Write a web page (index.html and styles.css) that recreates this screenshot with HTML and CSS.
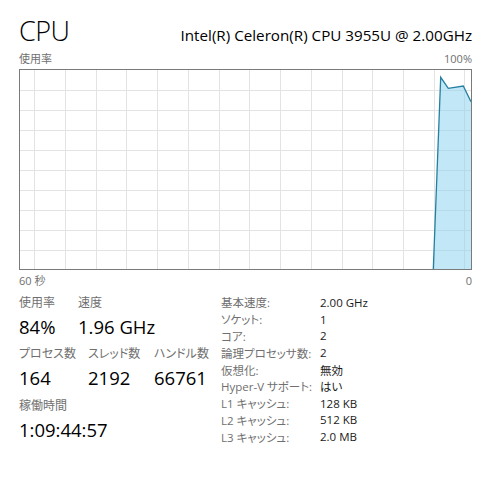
FILE: index.html
```html
<!DOCTYPE html>
<html lang="ja">
<head>
<meta charset="utf-8">
<title>CPU</title>
<link rel="stylesheet" href="styles.css">
</head>
<body>
<div class="page">
  <header class="head">
    <h1 class="title">CPU</h1>
    <div class="model">Intel(R) Celeron(R) CPU 3955U @ 2.00GHz</div>
  </header>
  <div class="axis axis-top">
    <span>使用率</span>
    <span>100%</span>
  </div>
  <div class="graph">
    <svg class="graph-svg" width="451" height="199" viewBox="0 0 451 199">
      <g class="grid">
        <line x1="14.5" y1="0" x2="14.5" y2="199"/>
        <line x1="45.5" y1="0" x2="45.5" y2="199"/>
        <line x1="76.5" y1="0" x2="76.5" y2="199"/>
        <line x1="106.5" y1="0" x2="106.5" y2="199"/>
        <line x1="137.5" y1="0" x2="137.5" y2="199"/>
        <line x1="168.5" y1="0" x2="168.5" y2="199"/>
        <line x1="199.5" y1="0" x2="199.5" y2="199"/>
        <line x1="229.5" y1="0" x2="229.5" y2="199"/>
        <line x1="260.5" y1="0" x2="260.5" y2="199"/>
        <line x1="291.5" y1="0" x2="291.5" y2="199"/>
        <line x1="322.5" y1="0" x2="322.5" y2="199"/>
        <line x1="352.5" y1="0" x2="352.5" y2="199"/>
        <line x1="383.5" y1="0" x2="383.5" y2="199"/>
        <line x1="414.5" y1="0" x2="414.5" y2="199"/>
        <line x1="444.5" y1="0" x2="444.5" y2="199"/>
        <line x1="0" y1="20.5" x2="451" y2="20.5"/>
        <line x1="0" y1="40.5" x2="451" y2="40.5"/>
        <line x1="0" y1="60.5" x2="451" y2="60.5"/>
        <line x1="0" y1="80.5" x2="451" y2="80.5"/>
        <line x1="0" y1="100.5" x2="451" y2="100.5"/>
        <line x1="0" y1="120.5" x2="451" y2="120.5"/>
        <line x1="0" y1="140.5" x2="451" y2="140.5"/>
        <line x1="0" y1="160.5" x2="451" y2="160.5"/>
        <line x1="0" y1="180.5" x2="451" y2="180.5"/>
      </g>
      <polygon class="area" points="413.3,199 420.7,7.3 428.3,18.3 443.3,16 451,31.7 451,199"/>
      <polyline class="line" points="413.3,199 420.7,7.3 428.3,18.3 443.3,16 451,31.7"/>
    </svg>
  </div>
  <div class="axis axis-bottom">
    <span>60 秒</span>
    <span>0</span>
  </div>
  <section class="stats">
    <div class="stats-left">
      <div class="group g1">
        <div class="stat w59"><div class="label">使用率</div><div class="value">84%</div></div>
        <div class="stat"><div class="label">速度</div><div class="value">1.96 GHz</div></div>
      </div>
      <div class="group g2">
        <div class="stat w69"><div class="label">プロセス数</div><div class="value">164</div></div>
        <div class="stat w66"><div class="label">スレッド数</div><div class="value">2192</div></div>
        <div class="stat"><div class="label">ハンドル数</div><div class="value">66761</div></div>
      </div>
      <div class="group g3">
        <div class="stat"><div class="label">稼働時間</div><div class="value">1:09:44:57</div></div>
      </div>
    </div>
    <dl class="specs">
      <dt>基本速度:</dt><dd>2.00 GHz</dd>
      <dt>ソケット:</dt><dd>1</dd>
      <dt>コア:</dt><dd>2</dd>
      <dt>論理プロセッサ数:</dt><dd>2</dd>
      <dt>仮想化:</dt><dd>無効</dd>
      <dt>Hyper-V サポート:</dt><dd>はい</dd>
      <dt>L1 キャッシュ:</dt><dd>128 KB</dd>
      <dt>L2 キャッシュ:</dt><dd>512 KB</dd>
      <dt>L3 キャッシュ:</dt><dd>2.0 MB</dd>
    </dl>
  </section>
</div>
</body>
</html>
```

FILE: styles.css
```css
html, body {
  margin: 0;
  padding: 0;
  background: #ffffff;
}
body {
  font-family: "Open Sans", "Noto Sans CJK JP", sans-serif;
  color: #000;
  font-feature-settings: "palt";
}
.page {
  padding: 12px 22px 0 19px;
  width: 453px;
}
.head {
  display: flex;
  justify-content: space-between;
  align-items: baseline;
  height: 39px;
}
.title {
  margin: 0;
  font-size: 27px;
  font-weight: 300;
  line-height: 37px;
  letter-spacing: -0.5px;
}
.model {
  font-size: 15.2px;
  line-height: 20px;
}
.axis {
  display: flex;
  justify-content: space-between;
  font-size: 11px;
  line-height: 16px;
  color: #707070;
}
.axis-top {
  margin-bottom: 2px;
}
.axis-bottom {
  margin-top: 3px;
}
.graph {
  border: 1px solid #7a7a7a;
  width: 451px;
  height: 199px;
}
.graph-svg {
  display: block;
}
.grid line {
  stroke: #e3e3e3;
  stroke-width: 1;
}
.area {
  fill: #8fd3ef;
  fill-opacity: 0.55;
}
.line {
  fill: none;
  stroke: #23809f;
  stroke-width: 1.3;
}
.stats {
  display: flex;
  margin-top: 5px;
}
.stats-left {
  width: 202px;
  padding-top: 1px;
}
.group {
  display: flex;
}
.g2 {
  margin-top: 7px;
}
.g3 {
  margin-top: 8px;
}
.stat {
  display: flex;
  flex-direction: column;
}
.w59 { width: 59px; }
.w69 { width: 69px; }
.w66 { width: 66px; }
.label {
  font-size: 12px;
  line-height: 16px;
  color: #707070;
  white-space: nowrap;
}
.value {
  font-size: 18.5px;
  line-height: 24px;
  margin-top: 4px;
  white-space: nowrap;
}
.specs {
  margin: 0;
  display: grid;
  grid-template-columns: 99px auto;
  grid-auto-rows: 16.8px;
  align-items: center;
  font-size: 11.5px;
}
.specs dt {
  color: #707070;
  white-space: nowrap;
}
.specs dd {
  margin: 0;
  color: #1a1a1a;
  white-space: nowrap;
}
```
